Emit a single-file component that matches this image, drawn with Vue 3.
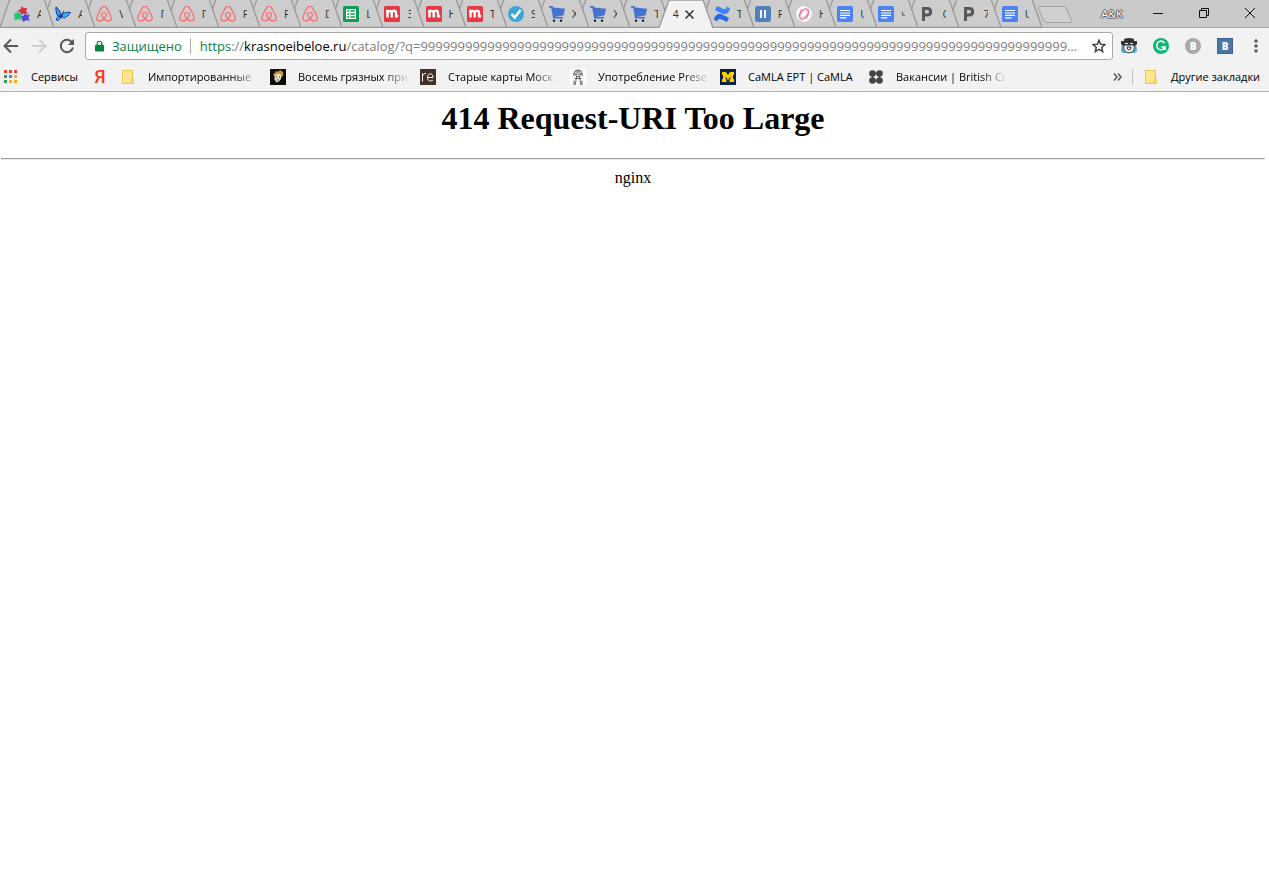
<script setup>
import { ref } from 'vue'

const tabs = [
  { icon: 'stars', text: 'А' }, { icon: 'butterfly', text: 'А' }, { icon: 'airbnb', text: 'V' },
  { icon: 'airbnb', text: 'П' }, { icon: 'airbnb', text: 'Г' }, { icon: 'airbnb', text: 'F' },
  { icon: 'airbnb', text: 'F' }, { icon: 'airbnb', text: 'D' }, { icon: 'sheet', text: 'L' },
  { icon: 'miro', text: 'З' }, { icon: 'miro', text: 'Н' }, { icon: 'miro', text: 'Т' },
  { icon: 'check', text: 'S' }, { icon: 'cart', text: 'Х' }, { icon: 'cart', text: 'Х' },
  { icon: 'cart', text: 'Т' }, { icon: '', text: '4', active: true }, { icon: 'confluence', text: 'Т' },
  { icon: 'pause', text: 'F' }, { icon: 'pink', text: 'Н' }, { icon: 'doc', text: 'U' },
  { icon: 'doc', text: 'ч' }, { icon: 'letterp', text: 'C' }, { icon: 'letterp', text: '7' },
  { icon: 'doc', text: 'U' },
]

const bookmarks = [
  { icon: 'folder', text: 'Импортированные' },
  { icon: 'portrait', text: 'Восемь грязных при' },
  { icon: 're', text: 'Старые карты Моск' },
  { icon: 'figure', text: 'Употребление Prese' },
  { icon: 'michigan', text: 'CaMLA EPT | CaMLA', full: true },
  { icon: 'dots', text: 'Вакансии | British Co' },
]

const path = ref('/catalog/?q=' + '9'.repeat(200))
</script>

<template>
  <svg class="defs" aria-hidden="true">
    <symbol id="i-stars" viewBox="0 0 16 16">
      <path fill="#d9304c" d="M8 0l1.800 2.300 3.400-.5-1 3.200L14 8 9.500 7.800 7 9 6 6 3 5l3.500-1.800z" />
      <path fill="#1fc96b" d="M3 5l2.500 2.200 3 .3-1.500 2.500 1 4.500-3.500-1.500L.5 14.500V10.500L0 7.800l2.500-.3z" />
      <path fill="#5146dc" d="M10.500 7l1.500 2 4-.5-1.500 3 1 3.500-3-1L9 16 8.200 12.500 7 10l3-.5z" />
    </symbol>
    <symbol id="i-butterfly" viewBox="0 0 16 16">
      <path fill="#22a8f5" stroke="#102c9c" d="M1 1C4 3 5.500 6 6 9.500L3 10.200C1.500 8 .5 4 1 1z" />
      <path fill="#22c4f7" stroke="#102c9c" d="M7 9.500C9 6.500 12 5.800 15.500 6.500 14 8 13 10.300 11 10.800 9.500 12.800 8 12.500 7 9.500zM6 10.500C5 13.500 3 15.500 1.500 14 1 12.500 2 11 4 10.500z" />
      <path fill="none" stroke="#101c58" d="M6 12.500l1-4.500 2-3" />
    </symbol>
    <symbol id="i-airbnb" viewBox="0 0 16 16">
      <path fill="none" stroke="#ff686c" stroke-width="1.200" d="M8 13C4.500 9.500 5 6.500 8 6.500S11.500 9.500 8 13c-3 3-7.500 2.300-7.200-1.200C1 10 4.500 3.200 5.800 1.400 7-.2 9-.2 10.200 1.400 11.500 3.200 15 10 15.200 11.800 15.500 15.300 11 16 8 13z" />
    </symbol>
    <symbol id="i-sheet" viewBox="0 0 16 16">
      <rect width="16" height="16" rx="1.500" fill="#0f9d58" />
      <path fill="#fff" fill-rule="evenodd" d="M3 3h10v10H3zM4.200 4.200v1.600h2V4.200zm3.200 0v1.600h4.400V4.200zM4.200 7.200v1.600h2V7.200zm3.200 0v1.600h4.400V7.200zM4.200 10.200v1.600h2v-1.600zm3.200 0v1.600h4.400v-1.600z" />
    </symbol>
    <symbol id="i-miro" viewBox="0 0 16 16">
      <rect width="16" height="16" rx="1.500" fill="#e63946" />
      <path fill="none" stroke="#fff" stroke-width="2.400" d="M2 5h1.500v6.500M3.500 7c0-2.700 4.200-2.700 4.200 0v4.500M7.700 7C7.700 4 12 4 12 7v3.300h2.200" />
    </symbol>
    <symbol id="i-check" viewBox="0 0 16 16">
      <circle cx="8" cy="8" r="8" fill="#3ba5d9" />
      <path fill="none" stroke="#fff" stroke-width="2.500" d="M3.500 8l3.200 3.500L12.500 4" />
    </symbol>
    <symbol id="i-cart" viewBox="0 0 16 16">
      <path fill="#4672cf" d="M0 0h3.500l1 1.500L16 2.800 14.500 9.500l-9 1.200 8.500.2v1.600H4L3.700 9.800 2.200 1.800H0z" />
      <circle cx="5" cy="14.800" r="1.200" fill="#222" /><circle cx="12" cy="14.800" r="1.200" fill="#222" />
    </symbol>
    <symbol id="i-confluence" viewBox="0 0 16 16">
      <path fill="#2668e8" d="M.2 12C3 7.500 5 7 8.500 8.700l6.500 3-2 4.300-6-2.800C5 12.500 4 13 2.800 15.500L0 13.500z" />
      <path fill="#3e83ff" d="M15.800 4C13 8.500 11 9 7.500 7.300L1 4.300 3 0l6 2.800C11 3.500 12 3 13.200.5L16 2.500z" />
    </symbol>
    <symbol id="i-pause" viewBox="0 0 16 16">
      <rect width="16" height="16" rx="2.500" fill="#5181b8" /><path stroke="#fff" stroke-width="1.800" d="M6 4v8M10 4v8" />
    </symbol>
    <symbol id="i-pink" viewBox="0 0 16 16">
      <circle cx="8" cy="8" r="7.800" fill="#fff" />
      <ellipse cx="8" cy="8" rx="5.500" ry="3.500" transform="rotate(-50 8 8)" fill="none" stroke="#ee79a5" stroke-width="2" />
      <path fill="none" stroke="#f3a2bf" stroke-width="1.300" d="M4 4.500L12.500 3M3.500 13L12 11.500" />
    </symbol>
    <symbol id="i-doc" viewBox="0 0 16 16">
      <rect width="16" height="16" rx="1.500" fill="#4d82f3" /><path stroke="#fff" stroke-width="1.200" d="M3 4.500h10M3 7h10M3 9.400h10M3 11.800h6.500" />
    </symbol>
    <symbol id="i-letterp" viewBox="0 0 16 16">
      <path fill="none" stroke="#55595c" stroke-width="3" d="M4.500 15V2.500h3.800c4.500 0 4.500 6.500 0 6.500H4.500" />
    </symbol>
    <symbol id="i-folder" viewBox="0 0 16 16">
      <path fill="#fde68f" stroke="#e8c54c" d="M2.500 1.500h10v9h1v4h-11z" /><path fill="none" stroke="#e8c54c" d="M11.500 14v-3.500h1" />
    </symbol>
    <symbol id="i-portrait" viewBox="0 0 16 16">
      <rect width="16" height="16" fill="#0d0d0c" />
      <path fill="#c69332" d="M3 5l2-1 1-2 2 .8L10 1l3 2 .5 3-2 2H4.500z" /><path fill="#e9ddc5" d="M5 6l4-1.500L11.500 6 11 10l-2 2.500-2.500 1-2-3z" /><path stroke="#58462f" d="M6 8h1M9 8h1M7 11h2" />
    </symbol>
    <symbol id="i-re" viewBox="0 0 16 16">
      <rect width="16" height="16" fill="#443129" /><path fill="none" stroke="#fff" d="M2.500 12.500v-8M2.500 7c0-1.500 1.500-2.500 3.500-2.500M7.500 8.500H13C13 3.500 7.500 3.500 7.500 8.500c0 4 3.500 4 5.500 2.500" />
    </symbol>
    <symbol id="i-figure" viewBox="0 0 16 16">
      <rect width="16" height="16" fill="#fff" /><g fill="none" stroke="#606060"><path d="M4 7V4.500Q4 1 8 1t4 3.500V7M3 5h10M5.500 3h5M6 5v2.500h4V5M8 1v2M4.500 9.500h7M6.500 8v1.500M9.500 8v1.500M6 9.500v2l-1 4M10 9.500v2l1 4M4 11.500V16h2M12 11.500V16h-2" /></g>
    </symbol>
    <symbol id="i-michigan" viewBox="0 0 16 16">
      <rect width="16" height="16" fill="#0b2349" /><path fill="#ffcb05" d="M2 3h4l2 3 2-3h4v3h-1v4h1v3H9.500v-3h1V7.500L8 11 5.500 7.500V10h1v3H2v-3h1V6H2z" />
    </symbol>
    <symbol id="i-dots" viewBox="0 0 16 16">
      <g fill="#454545"><circle cx="4.500" cy="4.500" r="3.300" /><circle cx="11.500" cy="4.500" r="3.300" /><circle cx="4.500" cy="11.500" r="3.300" /><circle cx="11.500" cy="11.500" r="3.300" /></g>
      <path fill="none" stroke="#454545" stroke-width="1.500" d="M4.500 4.500h7v7h-7z" />
    </symbol>
  </svg>

  <div class="browser">
    <header class="strip">
      <nav class="tabs" aria-label="Вкладки">
        <div v-for="(t, i) in tabs" :key="i" class="tab" :class="{ active: t.active }" :style="{ zIndex: t.active ? 50 : 40 - i }">
          <svg class="shape" viewBox="0 0 54 28"><path :d="t.active ? 'M0 28L10 0H44L54 28' : 'M0 27.500L10 -1H44L54 27.500z'" /></svg>
          <svg v-if="t.icon" class="ico"><use :href="'#i-' + t.icon" /></svg>
          <span class="title">{{ t.text }}</span>
          <button v-if="t.active" class="close" aria-label="Закрыть вкладку">
            <svg viewBox="0 0 8 8"><path d="M.5 .5l7 7M7.500 .5l-7 7" /></svg>
          </button>
        </div>
      </nav>
      <button class="newtab" aria-label="Новая вкладка">
        <svg viewBox="0 0 36 17"><path d="M3 .5H26.500Q28 .5 29 2L34.500 14.500Q35 16.500 33 16.500H10Q8 16.500 7 15L1.500 3Q.5 .5 3 .5z" /></svg>
      </button>
      <div class="win">
        <button class="user">A&amp;K</button>
        <button class="ctl" aria-label="Свернуть"><svg viewBox="0 0 10 10"><path d="M0 5.500h10" /></svg></button>
        <button class="ctl" aria-label="Восстановить"><svg viewBox="0 0 10 10"><path d="M.5 2.500h7v7h-7zM2.500 2.500v-2h7v7h-2" /></svg></button>
        <button class="ctl last" aria-label="Закрыть"><svg viewBox="0 0 10 10"><path d="M0 0l10 10M10 0L0 10" /></svg></button>
      </div>
    </header>

    <div class="toolbar">
      <button class="nav" aria-label="Назад"><svg viewBox="0 0 16 16"><path d="M15 8H2M8 1.500L1.500 8 8 14.500" /></svg></button>
      <button class="nav off" aria-label="Вперёд"><svg viewBox="0 0 16 16"><path d="M1 8h13M8 1.500L14.500 8 8 14.500" /></svg></button>
      <button class="nav" aria-label="Обновить"><svg viewBox="0 0 16 16"><path d="M13.200 4.500A6.200 6.200 0 1 0 14 9.500" /><path class="solid" d="M15 .8V7H8.800z" /></svg></button>
      <div class="omni">
        <svg class="lock" viewBox="0 0 10 12"><path fill="#0b8043" d="M1 4.500h8q1 0 1 1V11q0 1-1 1H1q-1 0-1-1V5.500q0-1 1-1z" /><path fill="none" stroke="#0b8043" stroke-width="1.300" d="M2.500 5V3Q2.500 .7 5 .7T7.500 3V5" /></svg>
        <span class="secure">Защищено</span>
        <label class="url" for="address"><span class="green">https</span><span class="grey">://</span>krasnoeibeloe.ru</label>
        <input id="address" v-model="path" type="text" spellcheck="false" />
        <button class="star" aria-label="Добавить в закладки"><svg viewBox="0 0 14 14"><path d="M7 1.200l1.700 4 4.300.4-3.300 2.800 1 4.200L7 10.400l-3.700 2.200 1-4.200L1 5.600l4.300-.4z" /></svg></button>
      </div>
      <button class="ext" aria-label="Расширение">
        <svg viewBox="0 0 16 16"><path fill="#53a7cb" d="M1 6h14l1 6q-.5 3-3 3H3q-2.500 0-3-3z" /><circle cx="8" cy="9.500" r="5.300" fill="#f2f2f2" stroke="#444" /><path fill="#333" d="M3 1q5-2 10 0v2h3v3q-1 2-4 1.500H4Q1 8 0 6V3h3z" /><path stroke="#eee" d="M4 5.500h3M9 5.500h3" /><path fill="none" stroke="#333" d="M6 9q0 3 2 3t2-3z" /></svg>
      </button>
      <button class="ext" aria-label="Grammarly">
        <svg viewBox="0 0 16 16"><circle cx="8" cy="8" r="8" fill="#0db873" /><path fill="none" stroke="#fff" stroke-width="1.700" d="M11.500 5A4.300 4.300 0 1 0 12 9H8.500M12 8.500V12" /></svg>
      </button>
      <button class="ext" aria-label="B"><span class="round">B</span></button>
      <button class="ext" aria-label="B"><span class="square">B</span></button>
      <button class="menu" aria-label="Меню"><svg viewBox="0 0 4 14"><circle cx="2" cy="2" r="1.700" /><circle cx="2" cy="7" r="1.700" /><circle cx="2" cy="12" r="1.700" /></svg></button>
    </div>

    <nav class="bookmarks" aria-label="Закладки">
      <a href="#" class="mark">
        <svg class="bico" viewBox="0 0 16 16"><path fill="#ea4335" d="M1 1h3v3H1zM6 1h3v3H6zM11 1h3v3h-3z" /><path fill="#34a060" d="M1 6h3v3H1zM1 11h3v3H1z" /><path fill="#4285f4" d="M6 6h3v3H6z" /><path fill="#fbb013" d="M11 6h3v3h-3zM6 11h3v3H6zM11 11h3v3h-3z" /></svg>
        <span class="apps">Сервисы</span>
      </a>
      <a href="#" class="yandex" aria-label="Яндекс">Я</a>
      <a v-for="b in bookmarks" :key="b.icon" href="#" class="mark">
        <svg class="bico"><use :href="'#i-' + b.icon" /></svg>
        <span class="label" :class="{ full: b.full }">{{ b.text }}</span>
      </a>
      <button class="more" aria-label="Ещё"><svg viewBox="0 0 9 8"><path d="M1 .5L4 4 1 7.500M5 .5L8 4 5 7.500" /></svg></button>
      <a href="#" class="mark other">
        <svg class="bico"><use href="#i-folder" /></svg>
        <span class="rest">Другие закладки</span>
      </a>
    </nav>

    <main class="page">
      <h1>414 Request-URI Too Large</h1>
      <hr />
      <p>nginx</p>
    </main>
  </div>
</template>

<style>
body { margin: 0; background: #fff; }
</style>

<style scoped>
.defs { position: absolute; width: 0; height: 0; }
.browser { font-family: "Open Sans", "Noto Sans", sans-serif; font-size: 12px; color: #000; }
button { border: 0; padding: 0; margin: 0; background: none; font-family: inherit; color: inherit; }
a { color: inherit; text-decoration: none; }
svg { display: block; flex: none; }

.strip { display: flex; height: 28px; background: #cacaca; box-shadow: inset 0 -1px #a5a5a5; }
.tabs { display: flex; flex: 1; min-width: 0; isolation: isolate; }
.tab { position: relative; flex: 1 1 0; min-width: 0; display: flex; align-items: center; padding-left: 14px; box-sizing: border-box; height: 28px; }
.shape { position: absolute; left: 0; top: 0; width: 54px; height: 28px; }
.shape path { fill: #cdcdcd; stroke: #999; stroke-width: 1.300; }
.active .shape path { fill: #f2f2f2; }
.ico { position: relative; width: 16px; height: 16px; }
.title { position: relative; flex: none; width: 4px; margin-left: 7px; overflow: hidden; white-space: nowrap; color: #333; font-size: 11px; line-height: 16px; }
.active .title { width: 6px; margin-left: 0; }
.close { position: relative; margin-left: 6px; flex: none; }
.close svg { width: 9px; height: 9px; }
.close path { stroke: #333; stroke-width: 1.400; }
.newtab { width: 36px; margin: 0 24px 0 8px; }
.newtab svg { width: 36px; height: 17px; }
.newtab path { fill: #d0d0d0; stroke: #a2a2a2; }
.win { display: flex; align-items: center; height: 26px; }
.user { width: 30px; margin-right: 8px; font-size: 11px; color: #fff; text-shadow: 1px 0 #555, -1px 0 #555, 0 1px #555, 0 -1px #555; }
.ctl { width: 46px; display: grid; place-items: center; height: 26px; }
.last { width: 42px; padding-left: 4px; }
.ctl svg { width: 10px; height: 10px; }
.ctl path { fill: none; stroke: #111; }

.toolbar { display: flex; align-items: center; height: 34px; padding: 2px 7px 0 3px; box-sizing: border-box; background: #f2f2f2; }
.nav { width: 16px; margin-right: 12px; }
.nav svg { width: 16px; height: 16px; }
.nav path { fill: none; stroke: #555a5e; stroke-width: 2; }
.nav .solid { fill: #555a5e; stroke: none; }
.off path { stroke: #d1d1d1; }
.omni { display: flex; align-items: center; flex: 1; min-width: 0; height: 28px; box-sizing: border-box; margin: 0 8px 0 -2px; padding: 0 6px 0 9px; border: 1px solid #a9a9a9; border-radius: 3px; background: #fff; font-size: 13px; }
.lock { width: 9px; height: 12px; }
.secure { color: #0b8043; margin-left: 8px; padding-right: 8px; border-right: 1px solid #aaa; line-height: 16px; }
.url { margin-left: 9px; white-space: nowrap; }
.green { color: #0b8043; }
.grey { color: #808080; }
.omni input { flex: 1; min-width: 0; border: 0; padding: 0; outline: 0; background: none; font: inherit; color: #808080; text-overflow: ellipsis; }
.star { margin-left: 8px; }
.star svg { width: 14px; height: 14px; }
.star path { fill: none; stroke: #444; stroke-width: 1.500; }
.ext { width: 16px; height: 16px; margin-right: 16px; }
.ext svg { width: 16px; height: 16px; }
.round, .square { display: block; width: 16px; height: 16px; line-height: 16px; color: #fff; font-size: 10px; font-weight: 800; text-align: center; }
.round { border-radius: 50%; background: #aaa; }
.square { background: #4d75a3; box-shadow: inset 0 0 0 1px #3e6492; }
.menu { width: 13px; display: grid; place-items: center; }
.menu svg { width: 4px; height: 14px; fill: #555; }

.bookmarks { display: flex; align-items: center; height: 30px; padding: 0 6px 0 3px; box-sizing: border-box; background: #f2f2f2; border-bottom: 1px solid #b5b5b5; font-size: 11px; }
.mark { display: flex; align-items: center; gap: 12px; margin-right: 13px; white-space: nowrap; line-height: 16px; }
.bico { width: 16px; height: 16px; }
.apps { width: 48px; }
.yandex { width: 16px; margin-right: 12px; text-align: center; color: #f33b1d; font: 500 18px/20px Roboto, "Liberation Sans", sans-serif; }
.label { width: 109px; overflow: hidden; mask-image: linear-gradient(to right, #000 84px, transparent 112px); }
.full { width: 107px; mask-image: none; }
.more { margin-left: auto; padding-right: 10px; border-right: 1px solid #c4c4c4; height: 16px; }
.more svg { width: 9px; height: 8px; }
.more path { fill: none; stroke: #555; stroke-width: 1.500; }
.other { margin: 0 0 0 10px; }
.rest { min-width: 92px; }

.page { padding: 8px 4px 0 1px; text-align: center; font: 16px/20px "Liberation Serif", serif; color: #000; }
h1 { margin: 0; font-size: 32px; line-height: 36px; }
hr { margin: 22px 0 8px; border: 1px inset #eee; }
p { margin: 0; }
</style>
